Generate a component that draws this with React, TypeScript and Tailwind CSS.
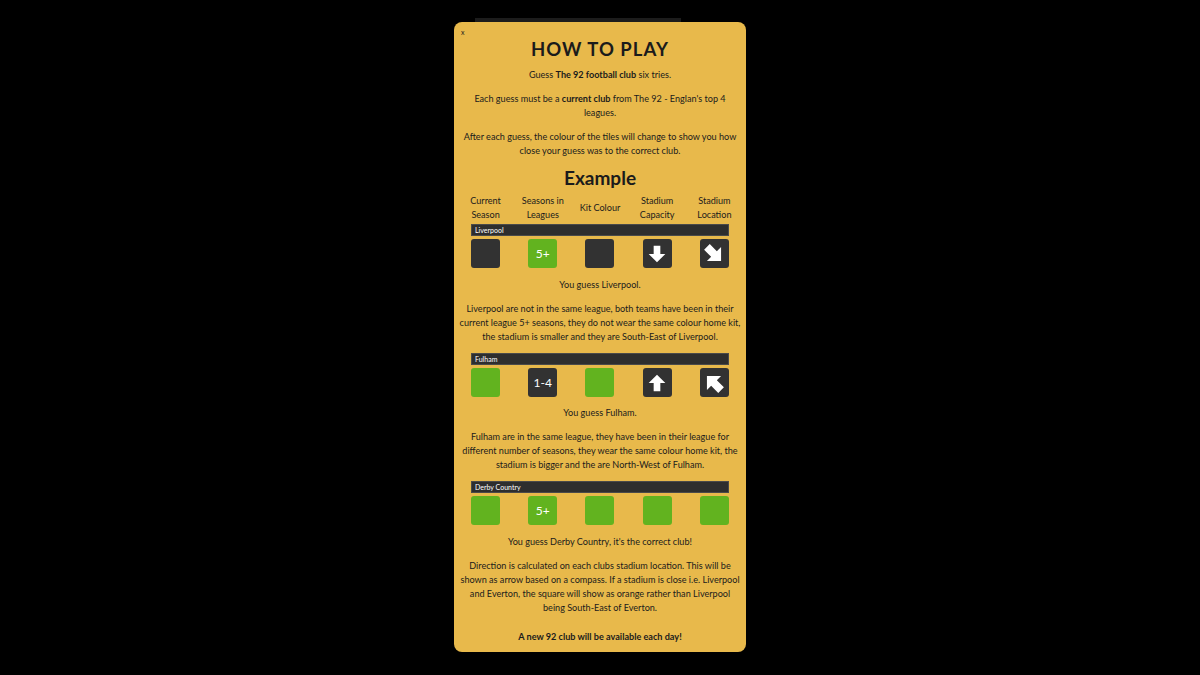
import React from "react";

type Tile = { kind: "dark" | "green"; label?: string; arrow?: number };

const cols = ["Current Season", "Seasons in Leagues", "Kit Colour", "Stadium Capacity", "Stadium Location"];

function Arrow({ rotate }: { rotate: number }) {
  const diag = rotate % 90 !== 0;
  return (
    <svg
      viewBox="0 0 24 24"
      className={diag ? "w-[24px] h-[24px]" : "w-[20px] h-[20px]"}
      style={{ transform: `rotate(${rotate}deg)` }}
    >
      <path d="M12 2 L22 12 L16 12 L16 22 L8 22 L8 12 L2 12 Z" fill="#fff" />
    </svg>
  );
}

function GuessRow({ name, tiles }: { name: string; tiles: Tile[] }) {
  return (
    <div className="flex flex-col">
      <div className="mx-[14px] h-[12px] bg-[#2e2e2e] border border-[#4a4a4a] text-white text-left text-[7px] leading-[10px] pl-[3px]">
        {name}
      </div>
      <div className="grid grid-cols-5 mt-[3px]">
        {tiles.map((t, i) => (
          <div key={i} className="flex justify-center">
            <div
              className={`w-[29px] h-[29px] rounded-[3px] flex items-center justify-center text-white text-[12px] ${
                t.kind === "green" ? "bg-[#62b31f]" : "bg-[#323232]"
              }`}
            >
              {t.label}
              {t.arrow !== undefined && <Arrow rotate={t.arrow} />}
            </div>
          </div>
        ))}
      </div>
    </div>
  );
}

export default function App() {
  return (
    <div className="min-h-screen bg-black flex flex-col items-center pt-[18px]" style={{ fontFamily: "Lato, 'Noto Sans', sans-serif" }}>
      <div className="w-[206px] h-[4px] bg-[#1c1c1c] ml-[-45px]" />
      <div className="w-[292px] h-[630px] bg-[#e8b94b] rounded-[8px] px-[3px] text-[#1b1b1b] text-[9.1px] leading-[14px] text-center flex flex-col">
        <div className="text-left text-[7px] leading-[8px] pl-[4px] pt-[6px]">x</div>
        <div className="text-[18.5px] leading-[22px] font-bold tracking-[1px] mt-[2px]">HOW TO PLAY</div>
        <p className="mt-[8px]">
          Guess <b>The 92 football club</b> six tries.
        </p>
        <p className="mt-[10px] px-[2px]">
          Each guess must be a <b>current club</b> from The 92 - Englan's top 4 leagues.
        </p>
        <p className="mt-[10px]">
          After each guess, the colour of the tiles will change to show you how close your guess was to the correct club.
        </p>
        <div className="text-[19px] leading-[22px] font-bold mt-[9px]">Example</div>
        <div className="grid grid-cols-5 mt-[5px] mb-[3px]">
          {cols.map((c) => (
            <div key={c} className="flex items-center justify-center px-[4px] h-[28px]">
              {c}
            </div>
          ))}
        </div>
        <div className="-mt-[1px]">
          <GuessRow
            name="Liverpool"
            tiles={[
              { kind: "dark" },
              { kind: "green", label: "5+" },
              { kind: "dark" },
              { kind: "dark", arrow: 180 },
              { kind: "dark", arrow: 135 },
            ]}
          />
        </div>
        <p className="mt-[10px]">You guess Liverpool.</p>
        <p className="mt-[10px]">
          Liverpool are not in the same league, both teams have been in their current league 5+ seasons, they do not wear the same colour home kit, the stadium is smaller and they are South-East of Liverpool.
        </p>
        <div className="mt-[9px]">
          <GuessRow
            name="Fulham"
            tiles={[
              { kind: "green" },
              { kind: "dark", label: "1-4" },
              { kind: "green" },
              { kind: "dark", arrow: 0 },
              { kind: "dark", arrow: -45 },
            ]}
          />
        </div>
        <p className="mt-[9px]">You guess Fulham.</p>
        <p className="mt-[10px]">
          Fulham are in the same league, they have been in their league for different number of seasons, they wear the same colour home kit, the stadium is bigger and the are North-West of Fulham.
        </p>
        <div className="mt-[9px]">
          <GuessRow
            name="Derby Country"
            tiles={[
              { kind: "green" },
              { kind: "green", label: "5+" },
              { kind: "green" },
              { kind: "green" },
              { kind: "green" },
            ]}
          />
        </div>
        <p className="mt-[10px]">You guess Derby Country, it's the correct club!</p>
        <p className="mt-[10px]">
          Direction is calculated on each clubs stadium location. This will be shown as arrow based on a compass. If a stadium is close i.e. Liverpool and Everton, the square will show as orange rather than Liverpool
          <br />
          being South-East of Everton.
        </p>
        <p className="mt-[15px] font-bold">A new 92 club will be available each day!</p>
      </div>
    </div>
  );
}
